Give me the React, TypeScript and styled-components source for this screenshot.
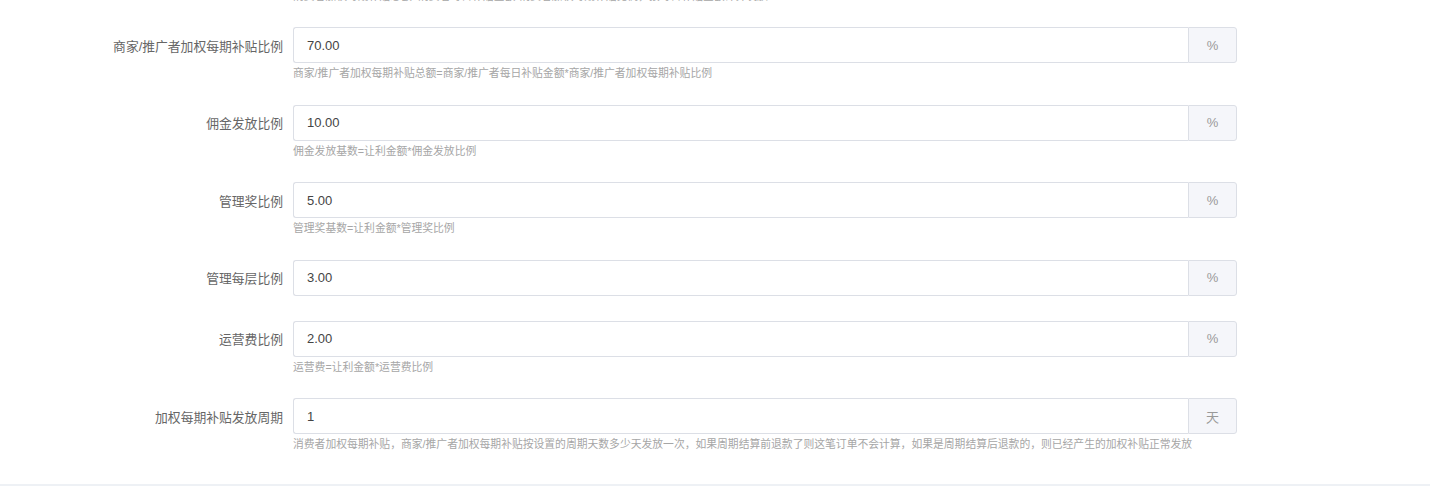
import React from "react";
import styled, { createGlobalStyle } from "styled-components";

const GlobalStyle = createGlobalStyle`
  html, body {
    margin: 0;
    padding: 0;
    background: #eef1f5;
    overflow: hidden;
  }
  body {
    font-family: "Liberation Sans", "Noto Sans CJK SC", sans-serif;
    color: #555;
  }
  * { box-sizing: border-box; }
`;

const Card = styled.div`
  background: #ffffff;
  margin-top: -50px;
  height: 534px;
`;

const Group = styled.div`
  display: grid;
  grid-template-columns: 283px 944px;
  column-gap: 10px;
  margin-bottom: 25px;
`;

const Label = styled.label`
  grid-column: 1;
  height: 36px;
  display: flex;
  align-items: center;
  justify-content: flex-end;
  font-size: 12.8px;
  color: #666;
  white-space: nowrap;
`;

const InputGroup = styled.div`
  grid-column: 2;
  display: flex;
  height: 36px;
`;

const Input = styled.input`
  flex: 1;
  min-width: 0;
  height: 36px;
  border: 1px solid #dcdfe6;
  border-right: none;
  border-radius: 3px 0 0 3px;
  padding: 0 13px;
  font-family: "Liberation Sans", "Noto Sans CJK SC", sans-serif;
  font-size: 13px;
  color: #444;
  background: #fff;
  outline: none;
`;

const Addon = styled.span`
  width: 49px;
  flex: none;
  display: flex;
  align-items: center;
  justify-content: center;
  border: 1px solid #dcdfe6;
  border-radius: 0 3px 3px 0;
  background: #f5f6fa;
  color: #999;
  font-size: 13px;
`;

const Help = styled.div`
  grid-column: 2;
  font-size: 10.8px;
  line-height: 16px;
  margin-top: 2px;
  margin-bottom: -1.6px;
  color: #a6a6a6;
  white-space: nowrap;
`;

type Field = { label: string; value: string; unit: string; help?: string };

const fields: Field[] = [
  {
    label: "加权每期补贴比例",
    value: "30.00",
    unit: "%",
    help: "消费者加权每期补贴总额=消费者每日补贴金额*消费者加权每期补贴比例，按每日补贴金额计算发放",
  },
  {
    label: "商家/推广者加权每期补贴比例",
    value: "70.00",
    unit: "%",
    help: "商家/推广者加权每期补贴总额=商家/推广者每日补贴金额*商家/推广者加权每期补贴比例",
  },
  { label: "佣金发放比例", value: "10.00", unit: "%", help: "佣金发放基数=让利金额*佣金发放比例" },
  { label: "管理奖比例", value: "5.00", unit: "%", help: "管理奖基数=让利金额*管理奖比例" },
  { label: "管理每层比例", value: "3.00", unit: "%" },
  { label: "运营费比例", value: "2.00", unit: "%", help: "运营费=让利金额*运营费比例" },
  {
    label: "加权每期补贴发放周期",
    value: "1",
    unit: "天",
    help: "消费者加权每期补贴，商家/推广者加权每期补贴按设置的周期天数多少天发放一次，如果周期结算前退款了则这笔订单不会计算，如果是周期结算后退款的，则已经产生的加权补贴正常发放",
  },
];

export default function App() {
  return (
    <>
      <GlobalStyle />
      <Card>
        {fields.map((f) => (
          <Group key={f.label}>
            <Label>{f.label}</Label>
            <InputGroup>
              <Input defaultValue={f.value} />
              <Addon>{f.unit}</Addon>
            </InputGroup>
            {f.help && <Help>{f.help}</Help>}
          </Group>
        ))}
      </Card>
    </>
  );
}
